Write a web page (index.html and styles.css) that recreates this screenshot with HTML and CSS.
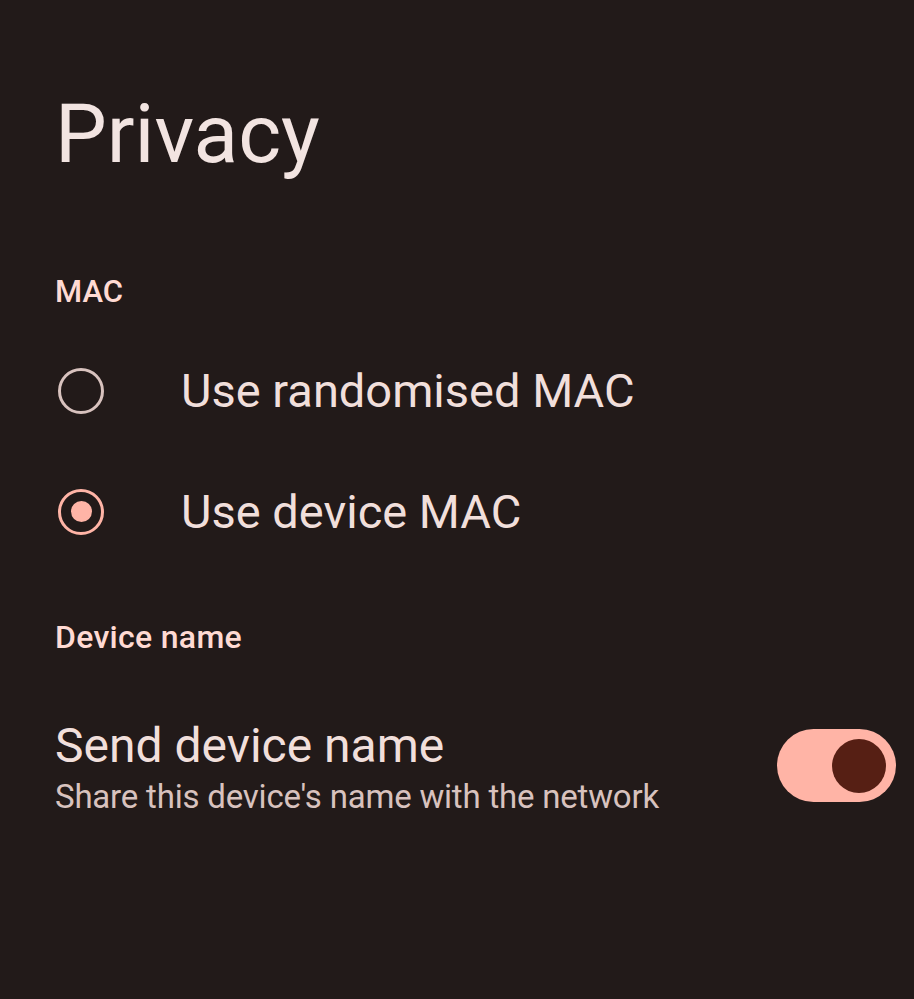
FILE: index.html
```html
<!DOCTYPE html>
<html>
<head>
<meta charset="utf-8">
<link rel="stylesheet" href="styles.css">
</head>
<body>
<main class="page">
  <h1 class="title">Privacy</h1>
  <section class="group">
    <h2 class="section-head mac">MAC</h2>
    <div class="radio-list">
      <div class="radio-row">
        <span class="radio"></span>
        <span class="radio-label">Use randomised MAC</span>
      </div>
      <div class="radio-row">
        <span class="radio checked"></span>
        <span class="radio-label">Use device MAC</span>
      </div>
    </div>
  </section>
  <section class="group">
    <h2 class="section-head device">Device name</h2>
    <div class="switch-row">
      <div class="switch-text">
        <div class="switch-title">Send device name</div>
        <div class="switch-sub">Share this device's name with the network</div>
      </div>
      <span class="switch"><span class="thumb"></span></span>
    </div>
  </section>
</main>
</body>
</html>
```
FILE: styles.css
```css
html, body {
  margin: 0;
  padding: 0;
  background: #221a19;
}
body {
  font-family: Roboto, "Noto Sans", sans-serif;
  color: #f1dfdb;
  width: 914px;
  height: 999px;
  overflow: hidden;
}
.page {
  display: flex;
  flex-direction: column;
  padding: 0 18px 0 55px;
}
.title {
  margin: 84px 0 0 0;
  font-size: 82px;
  font-weight: 400;
  line-height: 100px;
  color: #f2e4e1;
}
.group {
  display: flex;
  flex-direction: column;
}
.section-head {
  margin: 0;
  font-weight: 500;
  line-height: 40px;
  color: #ffdad3;
}
.section-head.mac {
  margin-top: 88px;
  font-size: 31px;
}
.section-head.device {
  margin-top: 45px;
  font-size: 32px;
  letter-spacing: 0.3px;
}
.radio-list {
  display: flex;
  flex-direction: column;
  margin-top: 18px;
}
.radio-row {
  display: flex;
  align-items: center;
  height: 121px;
}
.radio {
  box-sizing: border-box;
  width: 46px;
  height: 46px;
  margin-left: 3px;
  border: 3.5px solid #d8c2be;
  border-radius: 50%;
  display: flex;
  align-items: center;
  justify-content: center;
}
.radio.checked {
  border-color: #ffb4a6;
}
.radio.checked::after {
  content: "";
  width: 21px;
  height: 21px;
  border-radius: 50%;
  background: #ffb4a6;
}
.radio-label {
  margin-left: 77px;
  font-size: 47px;
  line-height: 60px;
  color: #f1dfdb;
}
.switch-row {
  display: flex;
  align-items: flex-start;
  justify-content: space-between;
  margin-top: 61px;
}
.switch-text {
  display: flex;
  flex-direction: column;
}
.switch-title {
  font-size: 48px;
  line-height: 56px;
  color: #f1dfdb;
}
.switch-sub {
  font-size: 33px;
  line-height: 46px;
  color: #d8c2be;
  letter-spacing: -0.2px;
}
.switch {
  margin-top: 11px;
  width: 119px;
  height: 73px;
  border-radius: 37px;
  background: #ffb4a6;
  display: flex;
  align-items: center;
  justify-content: flex-end;
  padding-right: 10px;
  box-sizing: border-box;
}
.thumb {
  width: 54px;
  height: 54px;
  border-radius: 50%;
  background: #561f14;
}
```
